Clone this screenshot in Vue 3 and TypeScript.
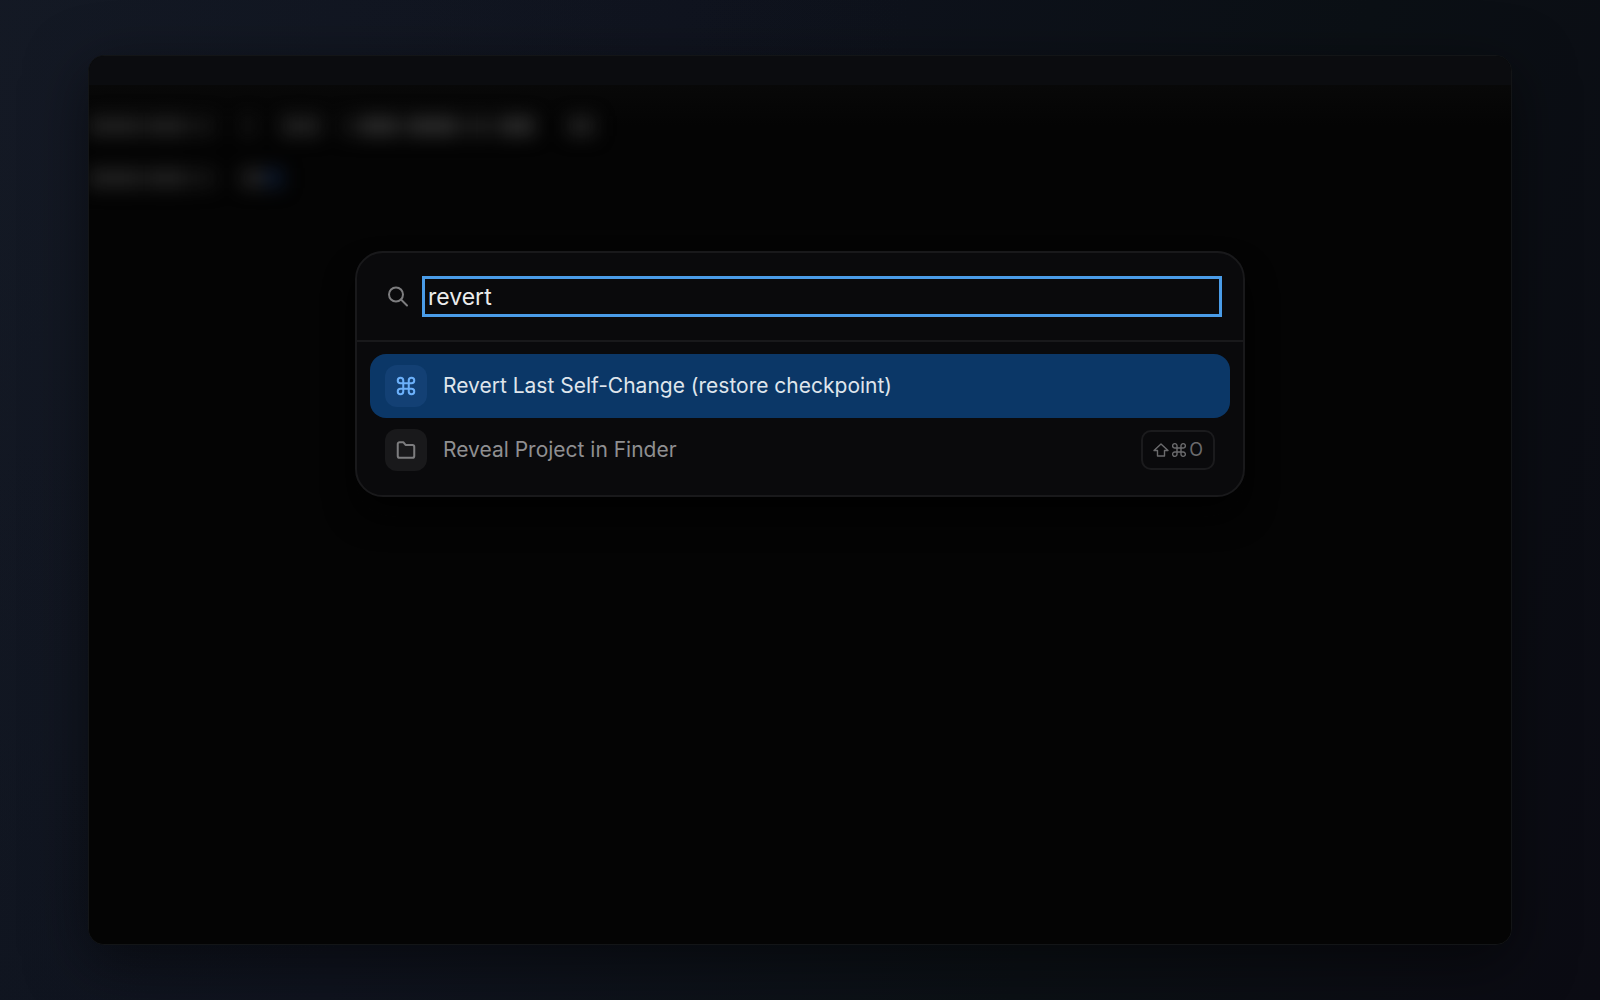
<script setup lang="ts">
import { ref } from 'vue'

interface Segment {
  width: number
  tone: 'dim' | 'soft' | 'bright' | 'gap' | 'cursor'
}

interface Command {
  id: string
  label: string
  icon: 'command' | 'folder'
  shortcutKey?: string
}

const query = ref('revert')
const selected = ref('revert-change')

const commands: Command[] = [
  { id: 'revert-change', label: 'Revert Last Self-Change (restore checkpoint)', icon: 'command' },
  { id: 'reveal-project', label: 'Reveal Project in Finder', icon: 'folder', shortcutKey: 'O' },
]

// Out-of-focus terminal output behind the palette
const terminalLines: Segment[][] = [
  [
    { width: 50, tone: 'soft' },
    { width: 10, tone: 'dim' },
    { width: 34, tone: 'soft' },
    { width: 32, tone: 'dim' },
    { width: 26, tone: 'gap' },
    { width: 14, tone: 'dim' },
    { width: 26, tone: 'gap' },
    { width: 40, tone: 'soft' },
    { width: 20, tone: 'gap' },
    { width: 20, tone: 'dim' },
    { width: 36, tone: 'bright' },
    { width: 12, tone: 'dim' },
    { width: 48, tone: 'bright' },
    { width: 14, tone: 'dim' },
    { width: 14, tone: 'soft' },
    { width: 16, tone: 'dim' },
    { width: 34, tone: 'bright' },
    { width: 32, tone: 'gap' },
    { width: 28, tone: 'soft' },
  ],
  [
    { width: 50, tone: 'soft' },
    { width: 10, tone: 'dim' },
    { width: 34, tone: 'soft' },
    { width: 32, tone: 'dim' },
    { width: 26, tone: 'gap' },
    { width: 24, tone: 'soft' },
    { width: 18, tone: 'cursor' },
  ],
]
</script>

<template>
  <div class="backdrop">
    <main class="window">
      <header class="titlebar"></header>
      <section class="workspace">
        <div class="terminal" aria-hidden="true">
          <div v-for="(line, i) in terminalLines" :key="i" class="line">
            <span
              v-for="(seg, j) in line"
              :key="j"
              class="segment"
              :class="seg.tone"
              :style="{ width: seg.width + 'px' }"
            ></span>
          </div>
        </div>

        <div class="palette" role="dialog" aria-label="Command palette">
          <div class="search">
            <label class="search-label" for="palette-query" aria-label="Search commands">
              <svg class="search-icon" viewBox="0 0 22 22" fill="none">
                <circle cx="8" cy="8.500" r="7" />
                <path d="M13 13.500 19 19.500" />
              </svg>
            </label>
            <input id="palette-query" v-model="query" class="query" type="text" spellcheck="false" />
          </div>

          <div class="results">
            <button
              v-for="cmd in commands"
              :key="cmd.id"
              type="button"
              class="row"
              :class="{ active: selected === cmd.id }"
              @mouseenter="selected = cmd.id"
            >
              <span class="tile">
                <svg v-if="cmd.icon === 'command'" class="icon" viewBox="0 0 24 24" fill="none">
                  <path
                    d="M15 6v12a3 3 0 1 0 3-3H6a3 3 0 1 0 3 3V6a3 3 0 1 0-3 3h12a3 3 0 1 0-3-3"
                  />
                </svg>
                <svg v-else class="icon" viewBox="0 0 24 24" fill="none">
                  <path
                    d="M3 18.500V5.500A2 2 0 0 1 5 3.500h4l2.500 3H19A2 2 0 0 1 21 8.500v10a2 2 0 0 1-2 2H5a2 2 0 0 1-2-2Z"
                  />
                </svg>
              </span>
              <span class="label">{{ cmd.label }}</span>
              <kbd v-if="cmd.shortcutKey" class="shortcut">
                <svg class="modifier" viewBox="0 0 16 16" fill="none" role="img" aria-label="Shift">
                  <path d="M8 2 1 8.500h3.500V14h7V8.500H15Z" />
                </svg>
                <svg class="modifier" viewBox="0 0 16 16" fill="none" role="img" aria-label="Command">
                  <path
                    d="M10 4v8a2.200 2.200 0 1 0 2.200-2H4a2.200 2.200 0 1 0 2 2V4a2.200 2.200 0 1 0-2 2h8a2.200 2.200 0 1 0-2-2"
                  />
                </svg>
                <span>{{ cmd.shortcutKey }}</span>
              </kbd>
            </button>
          </div>
        </div>
      </section>
    </main>
  </div>
</template>

<style>
body {
  margin: 0;
  background: #0b0e15;
}
</style>

<style scoped>
.backdrop {
  box-sizing: border-box;
  display: flex;
  min-height: 100vh;
  padding: 55px 5.5vw;
  font-family: Inter, 'Liberation Sans', sans-serif;
  background:
    radial-gradient(circle at 0% 10%, rgba(24, 28, 40, 0.4), transparent 50%),
    linear-gradient(110deg, #111722 0%, #0f131e 35%, #0b1015 70%, #0b0b13 100%);
}

.window {
  display: flex;
  flex: 1;
  flex-direction: column;
  overflow: hidden;
  border: 1px solid #131517;
  border-radius: 16px;
  background: #040404;
  box-shadow: 0 16px 60px rgba(0, 0, 0, 0.5);
}

.titlebar {
  height: 29px;
  background: #0b0c0f;
}

.workspace {
  display: grid;
  flex: 1;
  justify-items: center;
  align-items: start;
  background: linear-gradient(#080808, #040404 40px);
}

.terminal,
.palette {
  grid-area: 1 / 1;
}

.terminal {
  display: flex;
  flex-direction: column;
  justify-self: start;
  gap: 32px;
  padding-top: 31px;
  filter: blur(9px);
}

.line {
  display: flex;
  height: 20px;
}

.segment.dim {
  background: #131313;
}

.segment.soft {
  background: #202020;
}

.segment.bright {
  background: #2a2a2a;
}

.segment.cursor {
  background: #0a162b;
}

.palette {
  box-sizing: border-box;
  width: 100%;
  max-width: 890px;
  margin-top: 166px;
  overflow: hidden;
  border: 2px solid #19191b;
  border-radius: 28px;
  background: #0a0a0c;
  box-shadow: 0 20px 30px #020202;
}

.search {
  display: flex;
  align-items: center;
  gap: 12px;
  padding: 23px 21px 23px 31px;
  border-bottom: 2px solid #19191b;
}

.search-label {
  display: flex;
}

.search-icon {
  width: 22px;
  height: 22px;
  stroke: #7d7d7f;
  stroke-width: 2;
  stroke-linecap: round;
}

.query {
  box-sizing: border-box;
  flex: 1;
  min-width: 0;
  height: 41px;
  padding: 1px 3px 0;
  border: 3px solid #4a9ce8;
  outline: none;
  background: transparent;
  color: #ececec;
  font: 400 23px/34px Inter, 'Liberation Sans', sans-serif;
}

.results {
  padding: 12px 13px 13px;
}

.row {
  display: flex;
  box-sizing: border-box;
  align-items: center;
  gap: 16px;
  width: 100%;
  height: 64px;
  padding: 0 15px;
  border: 0;
  border-radius: 16px;
  background: transparent;
  color: #8f8f91;
  font: 400 21px/28px Inter, 'Liberation Sans', sans-serif;
  text-align: left;
}

.row.active {
  background: #0b3767;
  color: #dfe5ec;
}

.tile {
  display: flex;
  flex: none;
  align-items: center;
  justify-content: center;
  width: 42px;
  height: 42px;
  border-radius: 12px;
  background: #19191b;
}

.active .tile {
  background: #134074;
}

.icon {
  width: 22px;
  height: 22px;
  stroke: #7d7d7f;
  stroke-width: 2.2;
  stroke-linecap: round;
  stroke-linejoin: round;
}

.active .icon {
  stroke: #6cb0fa;
}

.label {
  flex: 1;
}

.shortcut {
  display: flex;
  box-sizing: border-box;
  align-items: center;
  gap: 2px;
  height: 40px;
  padding: 0 10px;
  border: 2px solid #1b1b1d;
  border-radius: 10px;
  color: #6b6b6d;
  font: 400 18px/36px Inter, 'Liberation Sans', sans-serif;
}

.modifier {
  width: 16px;
  height: 16px;
  stroke: currentColor;
  stroke-width: 1.4;
  stroke-linejoin: round;
}
</style>
